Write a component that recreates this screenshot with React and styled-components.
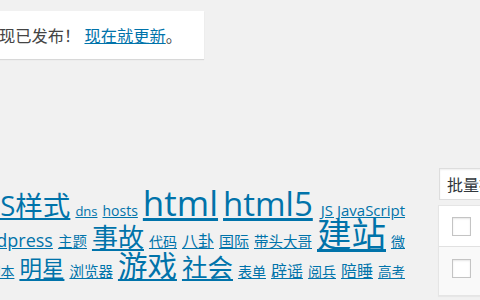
import styled, { createGlobalStyle } from "styled-components";

const GlobalStyle = createGlobalStyle`
  html, body {
    margin: 0;
    padding: 0;
    background: #f1f1f1;
  }
  body {
    font-family: "Open Sans", "Noto Sans CJK SC", sans-serif;
    color: #444;
  }
`;

const Screen = styled.div`
  width: 480px;
  height: 300px;
  overflow: hidden;
`;

const NoticeBar = styled.div`
  display: flex;
  justify-content: flex-end;
  width: 204px;
  padding-top: 11px;
`;

const Notice = styled.div`
  flex-shrink: 0;
  height: 48px;
  box-sizing: border-box;
  padding: 0 22px 0 15px;
  background: #fff;
  border-left: 5px solid #ffba00;
  box-shadow: 0 1px 1px rgba(0, 0, 0, 0.1);
`;

const NoticeText = styled.p`
  margin: 0;
  font-size: 16.25px;
  line-height: 50px;
  white-space: nowrap;
  color: #444;
`;

const Link = styled.a`
  color: #0073aa;
  text-decoration: underline;
  cursor: pointer;
`;

const Columns = styled.div`
  display: flex;
  align-items: flex-start;
`;

const LeftCol = styled.div`
  width: 405px;
  flex-shrink: 0;
  margin-right: 33px;
  padding-top: 137px;
`;

const RightCol = styled.div`
  flex-shrink: 0;
  width: 320px;
  padding-top: 109px;
`;

const TagLine = styled.div`
  display: flex;
  justify-content: flex-end;
  height: 30.5px;
`;

const TagRun = styled.div`
  flex-shrink: 0;
  white-space: nowrap;
  font-size: 14px;
  line-height: 30.5px;
`;

const Tag = styled(Link)`
  font-size: ${(p) => p.$size}px;
  line-height: 0;
  margin-left: ${(p) => p.$gap || 5}px;
`;

const BulkSelect = styled.div`
  display: flex;
  align-items: center;
  box-sizing: border-box;
  width: 130px;
  height: 32px;
  margin-left: 1px;
  padding: 0 7px;
  background: #fff;
  border: 1px solid #ddd;
  box-shadow: inset 0 1px 2px rgba(0, 0, 0, 0.07);
  font-size: 16px;
  color: #32373c;
`;

const Table = styled.div`
  margin-top: 5px;
  background: #fff;
  border: 1px solid #e5e5e5;
  box-shadow: 0 1px 1px rgba(0, 0, 0, 0.04);
`;

const Row = styled.div`
  display: flex;
  height: ${(p) => (p.$head ? 41 : 48)}px;
  padding: ${(p) => (p.$head ? 11 : 12)}px 0 0 13px;
  box-sizing: border-box;
  background: ${(p) => (p.$striped ? "#f9f9f9" : "#fff")};
  border-bottom: ${(p) => (p.$head ? "1px solid #e1e1e1" : "none")};
`;

const Checkbox = styled.span`
  width: 19px;
  height: 19px;
  box-sizing: border-box;
  border: 1px solid #c4c4c4;
  background: #fff;
  box-shadow: inset 0 1px 2px rgba(0, 0, 0, 0.1);
`;

const tagLines = [
  [
    ["CSS样式", 27.5],
    ["dns", 13],
    ["hosts", 14],
    ["html", 35],
    ["html5", 33],
    ["JS JavaScript", 15, 8],
  ],
  [
    ["wordpress", 18],
    ["主题", 14.5],
    ["事故", 26],
    ["代码", 14],
    ["八卦", 16],
    ["国际", 15],
    ["带头大哥", 14.5],
    ["建站", 34.5],
    ["微", 14],
  ],
  [
    ["脚本", 14],
    ["明星", 22.5],
    ["浏览器", 14.5],
    ["游戏", 29.5],
    ["社会", 25.5],
    ["表单", 14],
    ["辟谣", 16],
    ["阅兵", 14],
    ["陪睡", 16],
    ["高考", 13.5],
  ],
];

export default function App() {
  return (
    <Screen>
      <GlobalStyle />
      <NoticeBar>
        <Notice>
          <NoticeText>
            WordPress 4.9.8 现已发布！ <Link>现在就更新</Link>。
          </NoticeText>
        </Notice>
      </NoticeBar>
      <Columns>
        <LeftCol>
          {tagLines.map((line, i) => (
            <TagLine key={i}>
              <TagRun>
                {line.map(([name, size, gap]) => (
                  <Tag key={name} $size={size} $gap={gap}>
                    {name}
                  </Tag>
                ))}
              </TagRun>
            </TagLine>
          ))}
        </LeftCol>
        <RightCol>
          <BulkSelect>批量操作</BulkSelect>
          <Table>
            <Row $head>
              <Checkbox />
            </Row>
            <Row $striped>
              <Checkbox />
            </Row>
          </Table>
        </RightCol>
      </Columns>
    </Screen>
  );
}
